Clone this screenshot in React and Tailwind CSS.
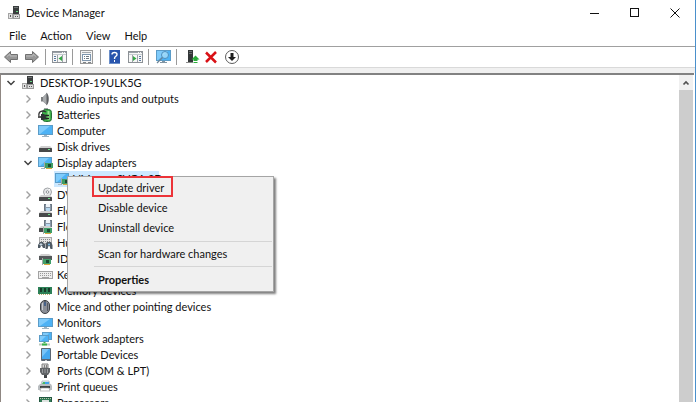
import React from "react";

const Svg = ({ children, w = 16, h = 16, className = "" }) => (
  <svg width={w} height={h} viewBox={`0 0 ${w} ${h}`} className={`shrink-0 ${className}`} aria-hidden="true">
    {children}
  </svg>
);

const Screen = ({ x, y, w, h }) => (
  <g>
    <rect x={x + 0.5} y={y + 0.5} width={w - 1} height={h - 1} fill="#4db2f5" stroke="#5b9cc8" />
    <path d={`M${x + 1} ${y + 1}H${x + w - 3}L${x + 2} ${y + h - 1}H${x + 1}Z`} fill="#7fcbfb" />
  </g>
);

const Chip = ({ x, y }) => (
  <g>
    <rect x={x} y={y} width="8" height="5" fill="#3f9e68" />
    <rect x={x + 3} y={y + 1} width="3" height="3" fill="#1c4a33" />
    <path d={`M${x + 1} ${y + 5.5}h6`} stroke="#d9a73c" />
    <path d={`M${x - 0.5} ${y - 1}v7`} stroke="#a4a9a6" />
  </g>
);

const Drive = ({ y = 9 }) => (
  <g>
    <path d={`M4 ${y}H13L15 ${y + 2}H2Z`} fill="#cfcfcf" />
    <rect x="2" y={y + 2} width="13" height="4" rx="0.500" fill="#47494a" />
    <rect x="11" y={y + 3} width="2" height="1" fill="#6fe08a" />
  </g>
);

const Floppy = () => (
  <g>
    <rect x="7.500" y="1.500" width="7" height="6" fill="#8a98a8" stroke="#6b7783" />
    <rect x="9" y="1" width="4" height="3" fill="#eef3f8" />
    <rect x="9" y="5" width="4" height="3" fill="#b5d8f0" />
  </g>
);

const icons = {
  root: (
    <g>
      <rect x="7" y="1" width="6" height="8" fill="#3a3d3e" />
      <path d="M8 2.500H12" stroke="#747879" />
      <rect x="10" y="6" width="2" height="1" fill="#67d37f" />
      <rect x="2.500" y="8.500" width="4" height="5" fill="#e2e2e2" stroke="#a4a4a4" />
      <rect x="7.500" y="9.500" width="6" height="4" fill="#dcdcdc" stroke="#9a9a9a" />
      <path d="M4.500 10V12M9.500 11V12M11.500 11V12" stroke="#555" />
    </g>
  ),
  audio: (
    <g>
      <path d="M4 6H6L10 2V14L6 10.500H4Z" fill="#7c7f81" />
      <path d="M6 6L10 2V14L6 10.500Z" fill="#a8abad" />
      <path d="M9.500 1.500C12.500 4 12.500 12 9.500 14.500Z" fill="#5c5f62" />
    </g>
  ),
  battery: (
    <g>
      <rect x="7" y="1" width="4" height="3" fill="#9fa5a6" />
      <rect x="5.500" y="2.500" width="9" height="12" rx="3" fill="#3daf49" stroke="#287038" />
      <path d="M11.500 4V13" stroke="#9de696" strokeWidth="2" />
      <path d="M1 10H5M8 8.500H12M8 11.500H12" stroke="#222" strokeWidth="1.500" />
      <path d="M4 7H7Q9 8 9 10Q9 13 6 13H4Z" fill="#2e3435" />
      <path d="M2 9C1 4 6 3 9 5" fill="none" stroke="#333" strokeWidth="1.300" />
    </g>
  ),
  computer: (
    <g>
      <Screen x={1} y={2} w={15} h={10} />
      <path d="M7 12H10V13H12V14H5V13H7Z" fill="#9db4c2" />
    </g>
  ),
  disk: <Drive y={7} />,
  display: (
    <g>
      <Screen x={1} y={2} w={14} h={10} />
      <path d="M4 13.500H7" stroke="#a9b7c0" />
      <Chip x={8} y={8} />
    </g>
  ),
  dvd: (
    <g>
      <circle cx="10.500" cy="5" r="4" fill="#e6e7e9" stroke="#a1a4a7" />
      <path d="M10.500 5L13 2M10.500 5L8 8" stroke="#fff" />
      <circle cx="10.500" cy="5" r="1.300" fill="#fff" stroke="#8e9296" />
      <Drive y={8} />
    </g>
  ),
  floppyDrive: (
    <g>
      <Floppy />
      <Drive y={8} />
    </g>
  ),
  floppyController: (
    <g>
      <Floppy />
      <Drive y={7} />
      <Chip x={7} y={9} />
    </g>
  ),
  hid: (
    <g>
      <rect x="2.500" y="2.500" width="12" height="6" fill="#e4e4e4" stroke="#a7a7a7" />
      <path d="M4 4.500H14M4 6.500H14" stroke="#888" strokeDasharray="1 1" />
      <path d="M1 13V10L3 7H6L7 9H8V13H6L5 11H4L3 13ZM8.500 14V9L10 7H14L15.500 10V14H13.500L12.500 11H11.500L10.500 14Z" fill="#4e5963" />
      <path d="M4 8V11M2.500 9.500H5.500" stroke="#c8d7e2" />
      <circle cx="12" cy="9.500" r="1" fill="#79bce9" />
    </g>
  ),
  ide: (
    <g>
      <path d="M4 3H12L15 5H2Z" fill="#cfcfcf" />
      <rect x="2" y="5" width="13" height="4" fill="#55585a" />
      <Chip x={6} y={8} />
    </g>
  ),
  keyboard: (
    <g>
      <rect x="1.500" y="4.500" width="14" height="7" fill="#eee" stroke="#a3a3a3" />
      <path d="M3 6.500H15M3 8.500H15" stroke="#999" strokeDasharray="1 1" />
      <path d="M5 10.500H12" stroke="#a2a2a2" />
    </g>
  ),
  memory: (
    <g>
      <rect x="1" y="4" width="14" height="7" fill="#2d8057" />
      <path d="M3 5h2v4H3ZM7 5h2v4H7ZM11 5h2v4h-2Z" fill="#193a2a" />
      <path d="M2 11.500H14" stroke="#b8a76b" strokeDasharray="1 1" />
    </g>
  ),
  mouse: (
    <g>
      <rect x="3.500" y="1.500" width="9" height="13" rx="4.500" fill="#8a8e96" stroke="#3e4146" />
      <path d="M5.500 4V11" stroke="#c8cbd0" />
      <path d="M8 1V7" stroke="#33363a" />
      <rect x="7" y="3" width="2" height="4" rx="1" fill="#46628a" />
      <path d="M10.500 4V12" stroke="#575b62" />
    </g>
  ),
  monitor: (
    <g>
      <Screen x={1} y={3} w={15} h={9} />
      <path d="M7 12H10V13H12V14H5V13H7Z" fill="#9db4c2" />
    </g>
  ),
  network: (
    <g>
      <Screen x={5} y={1} w={10} h={8} />
      <Screen x={2} y={4} w={10} h={7} />
      <path d="M2 13.500H13" stroke="#bccabf" strokeWidth="2" />
      <path d="M7.500 11V12M5 13.500H10" stroke="#37b34a" strokeWidth="2" />
    </g>
  ),
  portable: (
    <g>
      <rect x="4" y="1" width="10" height="13" rx="1" fill="#5b6672" />
      <rect x="5" y="2" width="8" height="10" fill="#45a8ef" />
      <path d="M5 2H12L5 10Z" fill="#79c4f7" />
      <path d="M8 13.500H10" stroke="#c9d0d6" />
    </g>
  ),
  port: (
    <g>
      <path d="M5 1H11V5H5Z" fill="#d5d5d5" stroke="#808080" />
      <path d="M7.500 2v3M9.500 2v3" stroke="#808080" />
      <path d="M3 5H13V9L11 12H5L3 9Z" fill="#606366" />
      <path d="M5.500 6V10M8 6V10M10.500 6V10" stroke="#999c9f" />
      <rect x="7" y="12" width="3" height="3" fill="#424548" />
    </g>
  ),
  printer: (
    <g>
      <path d="M5 2H12L13 6H4Z" fill="#eaf6fd" stroke="#8e9ba4" strokeWidth="0.600" />
      <path d="M6 3H8V5H5Z" fill="#4ab765" />
      <path d="M8 3H12V5H8Z" fill="#40a4ec" />
      <path d="M3 5H14L15 7V11H1V7Z" fill="#b9bdc0" />
      <path d="M3 7H13V9H3Z" fill="#404446" />
      <path d="M4 9H12L13 12H3Z" fill="#fff" stroke="#999" strokeWidth="0.600" />
    </g>
  ),
  processor: (
    <g>
      <rect x="2.500" y="2.500" width="12" height="12" fill="#327b57" stroke="#225840" />
      <path d="M3 3.500H15" stroke="#b7c7aa" strokeDasharray="1 1" />
      <rect x="5" y="5" width="7" height="7" fill="#dfe4e1" />
    </g>
  ),
};

const devices = [
  ["Audio inputs and outputs", "audio"],
  ["Batteries", "battery"],
  ["Computer", "computer"],
  ["Disk drives", "disk"],
  ["Display adapters", "display", "VMware SVGA 3D"],
  ["DVD/CD-ROM drives", "dvd"],
  ["Floppy disk drives", "floppyDrive"],
  ["Floppy drive controllers", "floppyController"],
  ["Human Interface Devices", "hid"],
  ["IDE ATA/ATAPI controllers", "ide"],
  ["Keyboards", "keyboard"],
  ["Memory devices", "memory"],
  ["Mice and other pointing devices", "mouse"],
  ["Monitors", "monitor"],
  ["Network adapters", "network"],
  ["Portable Devices", "portable"],
  ["Ports (COM & LPT)", "port"],
  ["Print queues", "printer"],
  ["Processors", "processor"],
];

const Toggle = ({ open, label }) => (
  <button type="button" aria-label={label} aria-expanded={open} className="mr-[3px] flex h-4 w-3 shrink-0 items-center justify-center">
    <Svg w={10} h={10}>
      {open ? (
        <path d="M1.500 3L5 6.500L8.500 3" fill="none" stroke="#404040" strokeWidth="1.500" />
      ) : (
        <path d="M3.500 1.500L7 5L3.500 8.500" fill="none" stroke="#a0a0a0" strokeWidth="1.400" />
      )}
    </Svg>
  </button>
);

const Node = ({ label, icon, open = false }) => (
  <div className="flex h-4 items-center whitespace-nowrap">
    <Toggle open={open} label={`Toggle ${label}`} />
    <Svg className="mr-1">{icons[icon]}</Svg>
    <span>{label}</span>
  </div>
);

const ToolButton = ({ label, children, className = "" }) => (
  <button type="button" aria-label={label} className={`flex h-5 shrink-0 items-center justify-center ${className}`}>
    <Svg w={18} h={18}>{children}</Svg>
  </button>
);

const Divider = () => <span className="mx-1 h-4 w-px shrink-0 bg-[#9a9a9a]" />;

const Panel = () => (
  <g>
    <rect x="2.500" y="3.500" width="14" height="11" fill="#f7f7f7" stroke="#8c9196" />
    <path d="M3 4.500H16" stroke="#9aa1a8" />
    <path d="M3 6.500H16" stroke="#c5cbd0" />
    <path d="M12 4.500H15" stroke="#f5f5f5" strokeDasharray="1 1" />
  </g>
);

const Toolbar = () => (
  <div role="toolbar" aria-label="Device actions" className="box-content flex h-5 items-center border-t border-[#a0a0a0] pl-[3px]">
    <ToolButton label="Back">
      <path d="M1.500 9L7.500 3.500V6.500H14.500V11.500H7.500V14.500Z" fill="#979797" stroke="#707070" />
      <path d="M4 8.500L7 6V8H14" fill="none" stroke="#bcbcbc" />
    </ToolButton>
    <ToolButton label="Forward" className="ml-[2px]">
      <path d="M15.500 9L9.500 3.500V6.500H2.500V11.500H9.500V14.500Z" fill="#979797" stroke="#707070" />
      <path d="M3 8H10V6L13 8.500" fill="none" stroke="#bcbcbc" />
    </ToolButton>
    <Divider />
    <ToolButton label="Show or hide console tree">
      <Panel />
      <path d="M7.500 7V14M12.500 7V14" stroke="#9da3a8" />
      <path d="M4 8.500H6M4 10.500H6M4 12.500H6" stroke="#5b7ca0" />
      <path d="M12 8V13L8.500 10.500Z" fill="#31a844" />
    </ToolButton>
    <Divider />
    <ToolButton label="Properties" className="mr-px">
      <rect x="3.500" y="2.500" width="12" height="13" fill="#f4f4f4" stroke="#9a9a9a" />
      <path d="M5 4.500H14" stroke="#a4a8ac" />
      <rect x="5.500" y="6.500" width="8" height="6" fill="#fff" stroke="#7e96ae" />
      <path d="M7 8.500H8M9 8.500H12M7 10.500H8M9 10.500H12" stroke="#6f7880" />
      <path d="M6 14.500H9M11 14.500H14" stroke="#7e8489" />
    </ToolButton>
    <Divider />
    <ToolButton label="Help">
      <rect x="4" y="2" width="11" height="14" fill="#2855ad" />
      <path d="M4.500 2V16M4 15.500H15" stroke="#6b8fca" />
      <path d="M7 6.500Q7 4.500 9.500 4.500Q12 4.500 12 6.500Q12 7.600 10.500 8.500Q9.500 9.200 9.500 11" fill="none" stroke="#fff" strokeWidth="1.400" />
      <rect x="9" y="12" width="1" height="2" fill="#fff" />
    </ToolButton>
    <ToolButton label="Show or hide action pane" className="ml-[3px]">
      <Panel />
      <path d="M6.500 7V14M11.500 7V14" stroke="#9da3a8" />
      <path d="M13 8.500H15M13 10.500H15M13 12.500H15" stroke="#5b7ca0" />
      <path d="M7 8V13L10.500 10.500Z" fill="#31a844" />
    </ToolButton>
    <Divider />
    <ToolButton label="Scan for hardware changes" className="ml-px">
      <Screen x={2} y={2} w={15} h={11} />
      <path d="M8 13H11V14H13V15H6V14H8Z" fill="#8094a3" />
      <circle cx="11" cy="7" r="3.500" fill="#a8ddfa" fillOpacity="0.800" stroke="#4c8fbf" />
      <path d="M8.500 9.500L3 15" stroke="#6a8396" strokeWidth="1.300" />
    </ToolButton>
    <Divider />
    <ToolButton label="Update device driver" className="ml-[2px]">
      <path d="M5 2H10V14H5Z" fill="#333638" />
      <path d="M6 3.500H9M6 5.500H9" stroke="#696e70" />
      <path d="M3 14.500H10" stroke="#8a8a8a" />
      <path d="M12.500 7.500L16.500 11.500H14.500V13H10.500V11.500H8.500Z" fill="#29ab39" />
      <path d="M10.500 14.500H14.500" stroke="#29ab39" />
    </ToolButton>
    <ToolButton label="Uninstall device" className="ml-px">
      <path d="M4 4.500L14 14.500M14 4L4 14" stroke="#d91116" strokeWidth="2.500" />
    </ToolButton>
    <ToolButton label="Disable device" className="ml-[3px]">
      <circle cx="9" cy="9" r="6.500" fill="#fff" stroke="#5c5c5c" />
      <path d="M7.500 5H10.500V9H13L9 13L5 9H7.500Z" fill="#1c1c1c" />
    </ToolButton>
  </div>
);

const MenuItem = ({ children, className = "" }) => (
  <button type="button" role="menuitem" className={`flex h-5 w-full items-center pl-[29px] text-left ${className}`}>
    {children}
  </button>
);

const ContextMenu = () => (
  <div role="menu" aria-label="Device menu" className="absolute left-[13px] top-[5px] z-10 w-[207px] border border-[#a5a5a5] bg-[#f0f0f0] p-px shadow-[2px_2px_2px_rgba(0,0,0,0.5)]">
    <div className="relative">
      <MenuItem>Update driver</MenuItem>
      <span className="pointer-events-none absolute -top-[2px] left-[23px] h-[21px] w-[81px] border-2 border-[#ec3338]" />
    </div>
    <MenuItem>Disable device</MenuItem>
    <MenuItem>Uninstall device</MenuItem>
    <hr className="mb-[2px] ml-[25px] mt-[3px] border-[#d5d5d5]" />
    <MenuItem>Scan for hardware changes</MenuItem>
    <hr className="mb-[3px] ml-[25px] mt-[2px] border-[#d5d5d5]" />
    <MenuItem className="font-bold">Properties</MenuItem>
  </div>
);

export default function App() {
  return (
    <div className="flex h-screen flex-col overflow-hidden border-r border-[#4a90cc] bg-white font-[Lato,'Open_Sans',sans-serif] text-[11px] leading-4 text-[#111]">
      <header className="flex h-[26px] shrink-0 items-center pl-[6px]">
        <Svg className="mr-1">{icons.root}</Svg>
        <h1>Device Manager</h1>
        <div className="ml-auto flex">
          <button type="button" aria-label="Minimize" className="flex h-6 w-10 items-center justify-center">
            <Svg w={10} h={10}><path d="M0 5.500H9" stroke="#111" /></Svg>
          </button>
          <button type="button" aria-label="Maximize" className="flex h-6 w-10 items-center justify-center">
            <Svg w={10} h={10}><rect x="0.500" y="0.500" width="8" height="8" fill="none" stroke="#111" /></Svg>
          </button>
          <button type="button" aria-label="Close" className="flex h-6 w-10 items-center justify-center">
            <Svg w={10} h={10}><path d="M0.500 0.500L9.500 9.500M9.500 0.500L0.500 9.500" stroke="#111" /></Svg>
          </button>
        </div>
      </header>
      <nav aria-label="Main menu" className="flex h-5 shrink-0 items-center gap-[14px] pl-[9px]">
        <button type="button">File</button>
        <button type="button">Action</button>
        <button type="button">View</button>
        <button type="button">Help</button>
      </nav>
      <Toolbar />
      <div className="h-[6px] shrink-0 border-t border-[#d9d9d9] bg-[#f0f0f0]" />
      <main className="mr-px flex min-h-0 flex-1 border-l border-t-2 border-l-[#8f8782] border-t-[#828282]">
        <div className="min-w-0 flex-1 overflow-hidden pl-1">
          <Node label="DESKTOP-19ULK5G" icon="root" open />
          <ul className="pl-[17px]">
            {devices.map(([label, icon, child]) => (
              <li key={label}>
                <Node label={label} icon={icon} open={Boolean(child)} />
                {child && (
                  <div className="relative ml-8 flex h-4">
                    <div className="flex h-4 w-[105px] items-center whitespace-nowrap bg-[#cce8ff]">
                      <Svg className="mr-[3px]">{icons.display}</Svg>
                      <span>{child}</span>
                    </div>
                    <ContextMenu />
                  </div>
                )}
              </li>
            ))}
          </ul>
        </div>
        <div className="mr-px flex w-[14px] shrink-0 flex-col bg-[#cdcdcd]">
          <button type="button" aria-label="Scroll up" className="flex h-[15px] items-center justify-center bg-[#f0f0f0]">
            <Svg w={8} h={8}><path d="M1.500 5.500L4 3L6.500 5.500" fill="none" stroke="#505050" strokeWidth="1.700" /></Svg>
          </button>
        </div>
      </main>
    </div>
  );
}
